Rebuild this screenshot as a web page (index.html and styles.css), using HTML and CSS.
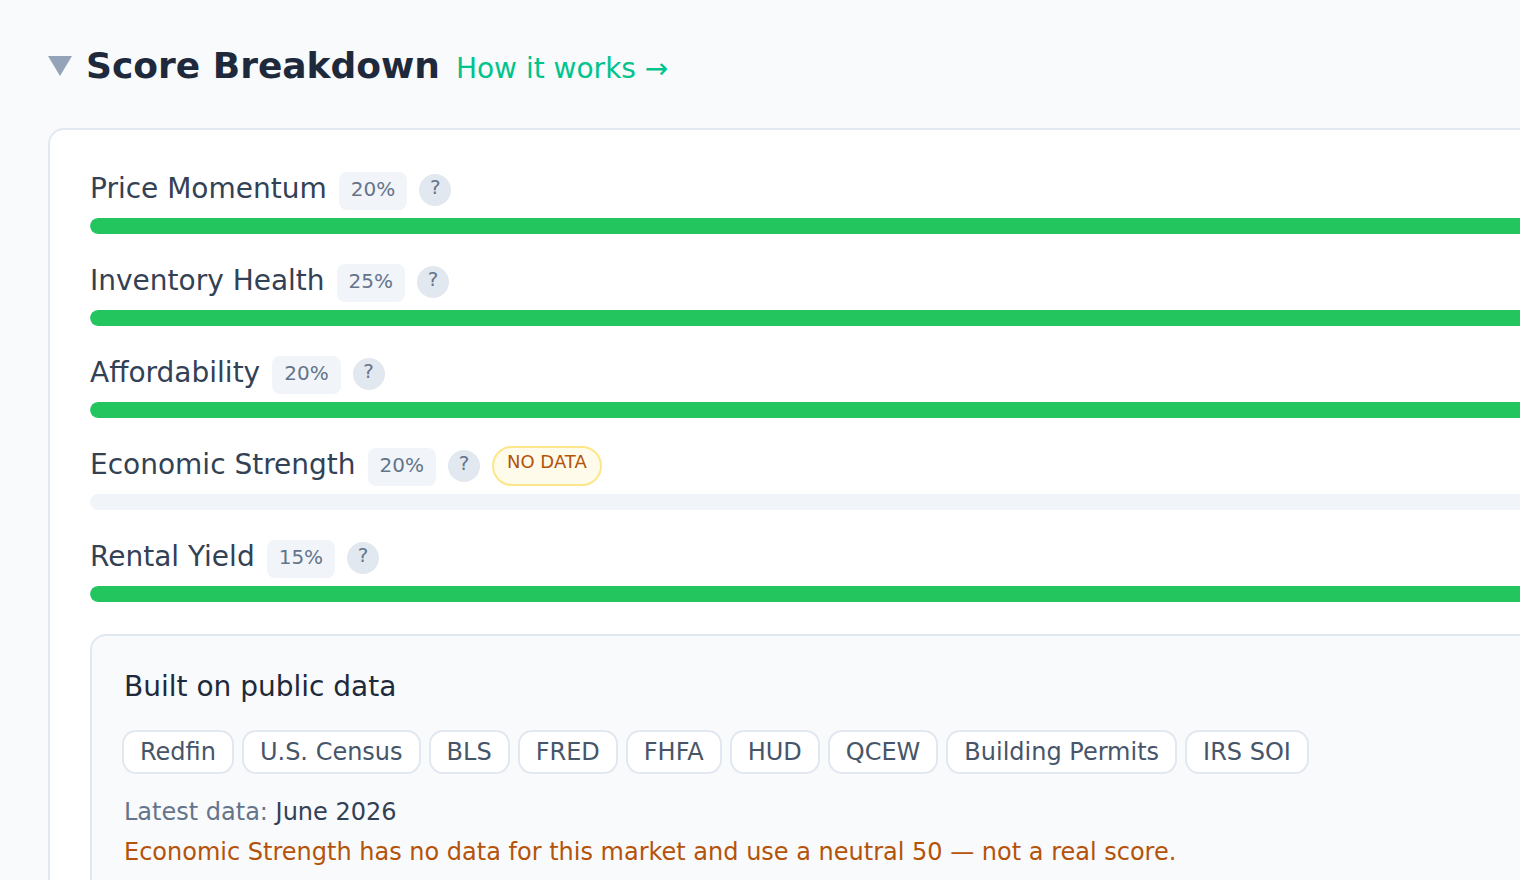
FILE: index.html
```html
<!DOCTYPE html>
<html lang="en">
<head>
<meta charset="utf-8">
<title>Score Breakdown</title>
<link rel="stylesheet" href="styles.css">
</head>
<body>
<main class="page">
  <header class="heading">
    <button class="toggle" type="button" aria-expanded="true" aria-label="Collapse section"><svg class="caret" viewBox="0 0 24 20" aria-hidden="true"><path d="M0 0h24L12 20z"/></svg></button>
    <h1 class="title">Score Breakdown</h1>
    <a class="how" href="#how">How it works →</a>
  </header>
  <section class="card">
    <div class="factor">
      <div class="factor-head"><span class="name">Price Momentum</span><span class="weight">20%</span><button class="help" type="button">?</button></div>
      <div class="track"><div class="fill"></div></div>
    </div>
    <div class="factor">
      <div class="factor-head"><span class="name">Inventory Health</span><span class="weight">25%</span><button class="help" type="button">?</button></div>
      <div class="track"><div class="fill"></div></div>
    </div>
    <div class="factor">
      <div class="factor-head"><span class="name">Affordability</span><span class="weight">20%</span><button class="help" type="button">?</button></div>
      <div class="track"><div class="fill"></div></div>
    </div>
    <div class="factor">
      <div class="factor-head"><span class="name">Economic Strength</span><span class="weight">20%</span><button class="help" type="button">?</button><span class="nodata">NO DATA</span></div>
      <div class="track"></div>
    </div>
    <div class="factor">
      <div class="factor-head"><span class="name">Rental Yield</span><span class="weight">15%</span><button class="help" type="button">?</button></div>
      <div class="track"><div class="fill"></div></div>
    </div>
    <section class="sources">
      <h2 class="sources-title">Built on public data</h2>
      <ul class="chips">
        <li class="chip">Redfin</li>
        <li class="chip">U.S. Census</li>
        <li class="chip">BLS</li>
        <li class="chip">FRED</li>
        <li class="chip">FHFA</li>
        <li class="chip">HUD</li>
        <li class="chip">QCEW</li>
        <li class="chip">Building Permits</li>
        <li class="chip">IRS SOI</li>
      </ul>
      <p class="latest">Latest data: <span class="date">June 2026</span></p>
      <p class="warning">Economic Strength has no data for this market and use a neutral 50 — not a real score.</p>
    </section>
  </section>
</main>
</body>
</html>
```

FILE: styles.css
```css
* {
  box-sizing: border-box;
}

html {
  background: #f8fafc;
}

body {
  margin: 0;
  overflow: hidden;
  color: #1e293b;
  font-family: "DejaVu Sans", sans-serif;
}

.page {
  display: flex;
  flex-direction: column;
  gap: 36px;
  min-height: 100vh;
  padding: 40px 0 0 48px;
}

.heading {
  display: flex;
  align-items: center;
  height: 52px;
}

.toggle {
  display: flex;
  margin: 0 14px 0 0;
  padding: 0;
  border: 0;
  background: none;
}

.caret {
  width: 24px;
  height: 20px;
  fill: #94a3b8;
}

.title {
  margin: 0 16px 0 0;
  font-size: 36px;
  line-height: 52px;
}

.how {
  padding-top: 5px;
  color: #00c48c;
  font-size: 28px;
  line-height: 40px;
  text-decoration: none;
}

.card {
  flex: 1;
  padding: 40px;
  margin-right: -96px;
  border: 2px solid #e2e8f0;
  border-radius: 16px;
  background: #fff;
}

.factor {
  margin-bottom: 28px;
}

.factor-head {
  display: flex;
  align-items: center;
  gap: 12px;
  height: 40px;
  margin-bottom: 8px;
}

.name {
  align-self: flex-start;
  color: #334155;
  font-size: 28px;
  line-height: 38px;
}

.weight {
  align-self: flex-end;
  height: 38px;
  padding: 0 12px;
  border-radius: 8px;
  background: #f1f5f9;
  color: #64748b;
  font-size: 20px;
  line-height: 34px;
}

.help {
  width: 32px;
  height: 32px;
  padding: 0 0 6px;
  border: 0;
  border-radius: 50%;
  background: #e2e8f0;
  color: #64748b;
  font-family: inherit;
  font-size: 20px;
  line-height: 24px;
}

.nodata {
  height: 40px;
  padding: 0 13px;
  border: 2px solid #fde68a;
  border-radius: 20px;
  background: #fffbeb;
  color: #b45309;
  font-size: 18px;
  line-height: 28px;
}

.track {
  height: 16px;
  overflow: hidden;
  border-radius: 8px;
  background: #f1f5f9;
}

.fill {
  height: 100%;
  border-radius: 8px;
  background: #22c55e;
}

.sources {
  margin-top: 32px;
  padding: 32px;
  border: 2px solid #e2e8f0;
  border-radius: 16px;
  background: #f8fafc;
}

.sources-title {
  margin: 0 0 24px;
  font-size: 28px;
  font-weight: 400;
  line-height: 38px;
}

.chips {
  display: flex;
  flex-wrap: wrap;
  gap: 8px;
  margin: 0 0 18px -2px;
  padding: 0;
  list-style: none;
}

.chip {
  padding: 0 16px;
  border: 2px solid #e2e8f0;
  border-radius: 14px;
  background: #fff;
  color: #475569;
  font-size: 24px;
  line-height: 40px;
}

.latest,
.warning {
  margin: 0;
  color: #64748b;
  font-size: 24px;
  line-height: 40px;
}

.date {
  color: #334155;
}

.warning {
  color: #b45309;
}
```
